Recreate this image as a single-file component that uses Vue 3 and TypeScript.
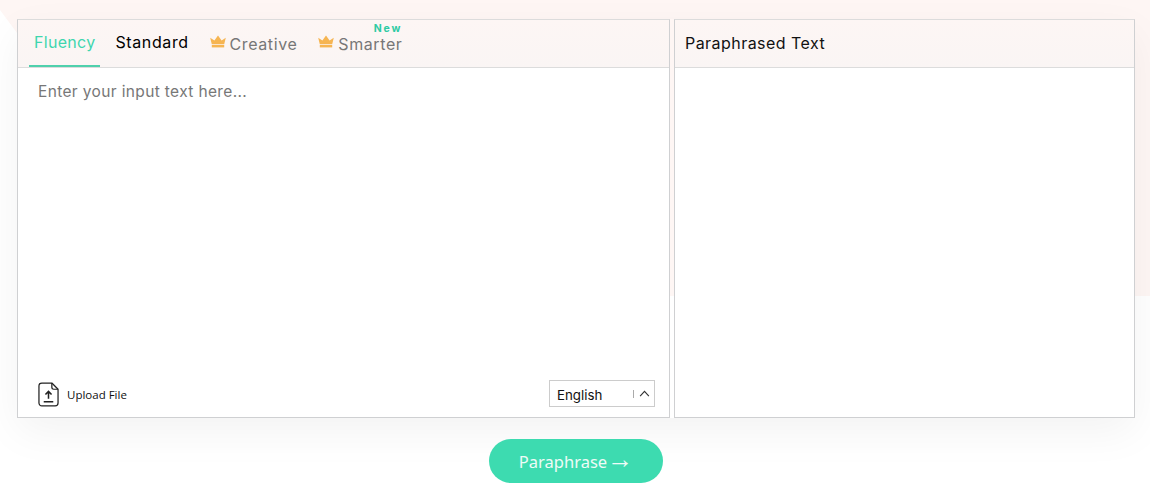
<script setup lang="ts">
const tabs = [
  { label: 'Fluency', active: true, premium: false, isNew: false },
  { label: 'Standard', active: false, premium: false, isNew: false },
  { label: 'Creative', active: false, premium: true, isNew: false },
  { label: 'Smarter', active: false, premium: true, isNew: true },
]
</script>

<template>
  <div class="page">
    <div class="pink"></div>
    <div class="panels">
      <section class="panel left">
        <header class="head tabs">
          <div v-for="t in tabs" :key="t.label" class="tab" :class="{ active: t.active, premium: t.premium }">
            <svg v-if="t.premium" class="crown" viewBox="0 0 16 13" width="16" height="13">
              <path d="M.2 2.8 4.4 5.6 8 .4l3.6 5.2 4.2-2.8L14.2 9.2H1.8z" fill="#f6b552" />
              <rect x="1.8" y="10" width="12.4" height="2.4" fill="#f6b552" />
            </svg>
            <span class="label">{{ t.label }}</span>
            <span v-if="t.isNew" class="new">New</span>
          </div>
        </header>
        <div class="input">Enter your input text here...</div>
        <footer class="foot">
          <div class="upload">
            <svg viewBox="0 0 22 26" width="21" height="25" fill="none" stroke="#222" stroke-width="1.3">
              <path d="M4 1h10.5L21 7.5V22a3 3 0 0 1-3 3H4a3 3 0 0 1-3-3V4a3 3 0 0 1 3-3z" stroke-linejoin="round" />
              <path d="M14.5 1v4.5a2 2 0 0 0 2 2H21" />
              <path d="M11 17.5V10M7.8 13 11 9.8l3.2 3.2" stroke-width="1.6" />
              <path d="M6 20.6h10" stroke-width="1.6" />
            </svg>
            <span>Upload File</span>
          </div>
          <div class="lang">
            <span class="lang-name">English</span>
            <span class="sep"></span>
            <svg viewBox="0 0 12 8" width="11" height="7" fill="none" stroke="#333" stroke-width="1.3"><path d="M1 7l5-5.5L11 7" /></svg>
          </div>
        </footer>
      </section>
      <section class="panel right">
        <header class="head title">Paraphrased Text</header>
        <div class="output"></div>
      </section>
    </div>
    <div class="actions">
      <button class="go" type="button"><span>Paraphrase</span><span class="arrow">→</span></button>
    </div>
  </div>
</template>

<style>
html, body { margin: 0; background: #fff; }
</style>

<style scoped>
.page {
  position: relative;
  width: 1150px;
  height: 498px;
  overflow: hidden;
  box-sizing: border-box;
  padding: 19px 15px 0 17px;
  font-family: Inter, "Liberation Sans", sans-serif;
  background: #fff;
}
.pink {
  position: absolute;
  left: 0;
  top: 0;
  width: 1150px;
  height: 296px;
  background: #fef6f4;
  clip-path: polygon(0 0, 100% 0, 100% 100%, 17px 100%, 17px 33px, 0 10px);
}
.panels {
  position: relative;
  display: flex;
  gap: 4px;
  height: 399px;
  box-shadow: 0 14px 40px rgba(0, 0, 0, 0.05);
}
.panel {
  box-sizing: border-box;
  display: flex;
  flex-direction: column;
  border: 1px solid #cfd0d2;
  border-top-color: #dcdcdc;
  background: #fff;
}
.left { width: 653px; }
.right { width: 461px; }
.head {
  box-sizing: border-box;
  height: 48px;
  flex: none;
  background: linear-gradient(#fdf6f4, #faf5f4);
  border-bottom: 1px solid #dcdcdc;
}
.tabs {
  display: flex;
  padding-left: 11px;
  gap: 10px;
}
.tab {
  position: relative;
  display: flex;
  align-items: center;
  gap: 4px;
  box-sizing: border-box;
  padding: 0 5px 3px;
  height: 47px;
  font-size: 16px;
  letter-spacing: 0.6px;
  color: #000;
}
.label {
  display: block;
  line-height: 16px;
}
.tab.active {
  color: #3fd6ae;
  letter-spacing: 0.3px;
  box-shadow: inset 0 -2px 0 #4fd0ac;
}
.tab.premium {
  color: #777;
  padding-bottom: 0;
  margin-left: 0.9px;
}
.crown { margin-bottom: 5px; }
.new {
  position: absolute;
  right: 5px;
  top: 3px;
  font-size: 10.5px;
  font-weight: 700;
  letter-spacing: 1.9px;
  color: #2fcba4;
  line-height: 11px;
}
.title {
  display: flex;
  align-items: center;
  padding: 0 0 2px 10px;
  font-size: 16px;
  letter-spacing: 0.45px;
  color: #111;
}
.input {
  flex: 1;
  padding: 14px 20px 12px;
  font-size: 15.5px;
  letter-spacing: 0.36px;
  line-height: 20px;
  color: #777;
}
.foot {
  display: flex;
  align-items: flex-end;
  justify-content: space-between;
  padding: 0 14px 10px 20px;
}
.upload {
  display: flex;
  align-items: center;
  gap: 8px;
  font-family: "Open Sans", sans-serif;
  font-size: 11.5px;
  color: #111;
}
.lang {
  box-sizing: border-box;
  display: flex;
  align-items: center;
  width: 106px;
  height: 27px;
  border: 1px solid #cccccc;
  padding: 0 4px 0 7px;
  font-size: 13.3px;
  color: #111;
}
.lang-name { flex: 1; position: relative; top: 1px; }
.sep { width: 1px; height: 8px; background: #aaa; margin-right: 5px; }
.output { flex: 1; }
.actions {
  position: relative;
  display: flex;
  justify-content: center;
  padding-top: 21px;
}
.go {
  width: 174px;
  height: 44px;
  border: 0;
  border-radius: 22px;
  background: #3ddbb0;
  color: #eefbf7;
  font-family: "Noto Sans", sans-serif;
  font-size: 16.5px;
}
.arrow {
  font-family: "Liberation Sans", sans-serif;
  font-size: 26px;
  line-height: 20px;
}
</style>
